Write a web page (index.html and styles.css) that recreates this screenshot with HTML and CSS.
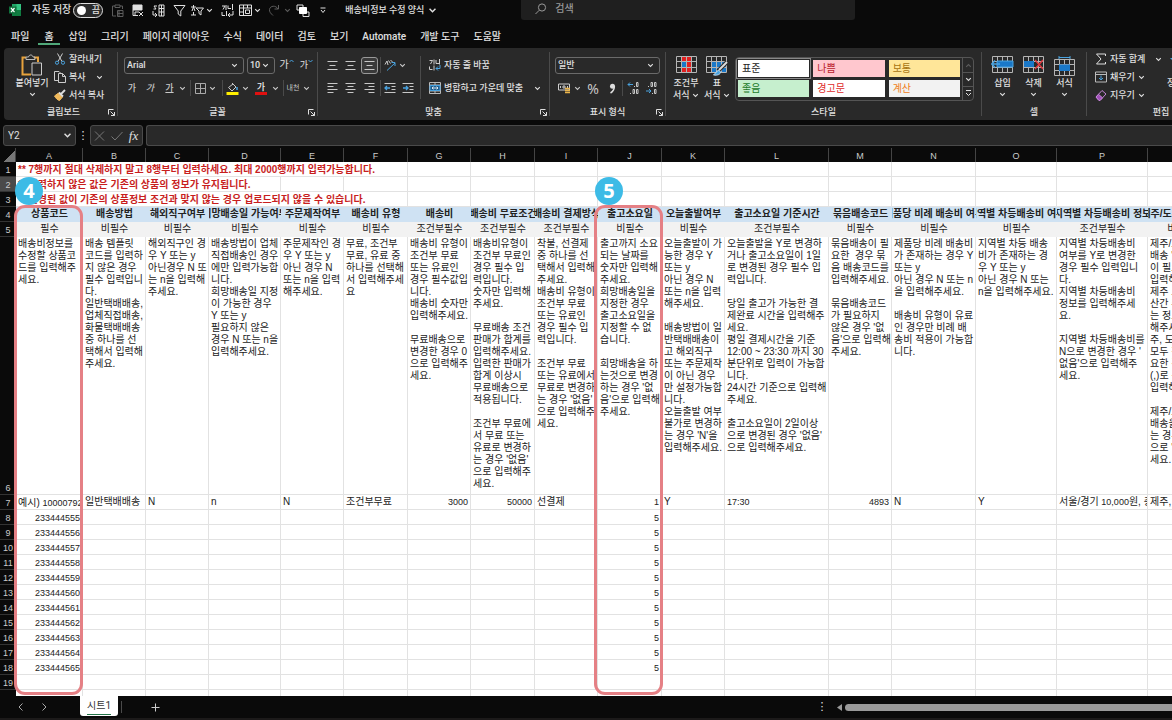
FILE: index.html
```html
<!DOCTYPE html>
<html lang="ko">
<head>
<meta charset="utf-8">
<title>배송비정보 수정 양식</title>
<link rel="stylesheet" href="styles.css">
</head>
<body>
<svg class="defs" aria-hidden="true">
  <symbol id="chev" viewBox="0 0 7 5"><path d="M1.2 1.2 3.5 3.5 5.8 1.2" fill="none" stroke="currentColor" stroke-width="1.1"/></symbol>
  <symbol id="launch" viewBox="0 0 7 7"><path d="M.5 5.5v-5h5M2.5 2.5l4 4M6.5 3v3.5H3" fill="none" stroke="currentColor"/></symbol>
  <symbol id="grid" viewBox="0 0 21 17"><path d="M.5.5h20v16H.5zM.5 5.5h20M.5 11.5h20M5.5.5v16M10.5.5v16M15.5.5v16" fill="none" stroke="#b5b5b5"/></symbol>
</svg>

<header class="titlebar">
  <svg class="logo" width="12" height="12" viewBox="0 0 12 12"><path d="M3 0h9v12H3z" fill="#21a366"/><path d="M7.500 0H12v6H7.500z" fill="#33c481"/><path d="M3 6h9v6H3z" fill="#107c41"/><path d="M0 2.500h7.500v7H0z" fill="#0f703b"/><path d="m2 4 3.500 4.200M5.500 4 2 8.200" stroke="#fff" stroke-width="1.200"/></svg>
  <label class="autosave">자동 저장 <button class="toggle" type="button"><i></i>끔</button></label>
  <div class="quick">
    <button class="dim"><svg width="12" height="13" viewBox="0 0 12 13"><path d="M3 2H.5v10H4M8 2h2.500v3M3 1h5v2.500H3zM5.500 6.500H11v6H5.500zM7 6.500v6M5.500 9.500H11"/></svg></button>
    <button><svg width="12" height="13" viewBox="0 0 12 13"><path d="M1 1h9v5H1z" fill="currentColor"/><path d="M1 6v5.500h5M3 11V8h4M7 8l4 4M11 8l-4 4"/></svg></button>
    <button><svg width="13" height="13" viewBox="0 0 13 13"><path d="M7 1h5v11H7zM7 4.500h5M7 8h5M9.500 1v11M5 2H2l2 3H1.500M1 7v4h4M3 9l2 2-2 2"/></svg></button>
    <button><svg width="13" height="13" viewBox="0 0 13 13"><path d="M1 1.500h11L7.800 7v5L5.200 10V7z"/></svg></button>
    <button><svg width="13" height="13" viewBox="0 0 13 13"><path d="M5 4h7.500L10 7v4L8 9.500V7zM0 3h5M2.500 1v2M1 7l1.500-4L4 7M0 11h5M2.500 8v3"/></svg></button>
    <button><svg width="7" height="5"><use href="#chev"/></svg></button>
    <button><svg width="13" height="13" viewBox="0 0 13 13"><path d="M1 2h3L2 5.500M5 1v5M7 1.500v3h3M8 4.500h2M11.500 0v6M1 8v3.500h3M5.500 7v5M12 7v4H7M9 9l-2 2 2 2"/></svg></button>
    <button><svg width="13" height="13" viewBox="0 0 13 13"><path d="M.5 1h12v10.500H.5zM.5 4h12M4.500 1v10.500M8.500 1v3M.5 8h4M6.500 6h4v3.500h-4z"/></svg></button>
    <button><svg width="7" height="5"><use href="#chev"/></svg></button>
    <button class="dim"><svg width="12" height="12" viewBox="0 0 12 12"><path d="M10.500 1v4h-4M10 5C8 1 2 1.500 1.500 5.500 1.200 8 3 9.500 5 11.500"/></svg></button>
    <button class="dim"><svg width="7" height="5"><use href="#chev"/></svg></button>
    <button><svg width="14" height="13" viewBox="0 0 14 13"><path d="M1 1h6v5H1zM7 8h6v4.500H7z"/><path d="M3.500 3.500h7v6h-7z" fill="#fff" stroke="#fff"/></svg></button>
    <button><svg width="6" height="7" viewBox="0 0 6 7"><path d="M.5 1h5M1 3l2 2.500L5 3"/></svg></button>
  </div>
  <button class="doc">배송비정보 수정 양식 <svg width="9" height="7"><use href="#chev"/></svg></button>
  <label class="search"><svg width="12" height="12" viewBox="0 0 12 12"><circle cx="7" cy="4.500" r="3.600"/><path d="M4.300 7.200.5 11"/></svg><input type="text" placeholder="검색"></label>
</header>

<nav class="tabs">
  <button>파일</button><button class="on">홈</button><button>삽입</button><button>그리기</button><button>페이지 레이아웃</button><button>수식</button><button>데이터</button><button>검토</button><button>보기</button><button>Automate</button><button>개발 도구</button><button>도움말</button>
</nav>

<section class="ribbon">
  <div class="group clip">
    <div class="body">
      <button class="big"><svg width="22" height="22" viewBox="0 0 22 22"><path d="M5 3.500H1.500v17H10" stroke="#e8a33d" stroke-width="2"/><path d="M13 3.500h4V8" stroke="#e8a33d" stroke-width="2"/><path d="M5 5.500V3h2.500C8 .3 11.500.3 12 3h2v2.500z" stroke="#bbb"/><path d="M11 9h9.500v12H11z" fill="#292929" stroke="#ccc"/></svg><span>붙여넣기</span><svg width="7" height="5"><use href="#chev"/></svg></button>
      <div class="stack">
        <button><svg width="12" height="12" viewBox="0 0 12 12"><path d="m3.500.5 4.500 8M8.500.5 4 8.500" stroke="#ccc"/><circle cx="3" cy="9.700" r="1.600" stroke="#4aa3df"/><circle cx="9" cy="9.700" r="1.600" stroke="#4aa3df"/></svg>잘라내기</button>
        <button><svg width="12" height="12" viewBox="0 0 12 12"><path d="M4 9.500H.5v-9H5L6.500 2M4.500 2.500h4l3 3v6h-7zM8.500 2.500v3h3" stroke="#ccc"/></svg>복사<svg class="after" width="7" height="5"><use href="#chev"/></svg></button>
        <button><svg width="12" height="12" viewBox="0 0 12 12"><path d="m.5 7 4-3 4 4-3 3.500C3.500 11 2 9.500.5 7z" fill="#f0b95c" stroke="#f0b95c"/><path d="m5 3.500 4 4M7 5l4-4" stroke="#ddd" stroke-width="1.800"/></svg>서식 복사</button>
      </div>
    </div>
    <div class="label">클립보드<svg width="7" height="7"><use href="#launch"/></svg></div>
  </div>
  <span class="rule"></span>
  <div class="group font">
    <div class="rows">
      <div class="fonts">
        <span class="combo"><select aria-label="글꼴"><option>Arial</option></select><svg width="7" height="5"><use href="#chev"/></svg></span>
        <span class="combo"><select aria-label="글꼴 크기"><option>10</option></select><svg width="7" height="5"><use href="#chev"/></svg></span>
        <button class="ga">가<svg width="5" height="4" viewBox="0 0 5 4"><path d="M.5 3 2.500 1l2 2" stroke="#4aa3df"/></svg></button>
        <button class="ga small">가<svg width="5" height="4" viewBox="0 0 5 4"><path d="m.5 1 2 2 2-2" stroke="#4aa3df"/></svg></button>
      </div>
      <div class="tools font-tools">
        <button><b>가</b></button><button><i>가</i></button><button><u>가</u></button><button><svg width="7" height="5"><use href="#chev"/></svg></button><span class="bar"></span>
        <button><svg width="11" height="11" viewBox="0 0 11 11"><path d="M.5.5h10v10H.5zM5.500.5v10M.5 5.500h10" stroke="#aaa"/></svg></button><button><svg width="7" height="5"><use href="#chev"/></svg></button><span class="bar"></span>
        <button><svg width="13" height="13" viewBox="0 0 13 13"><path d="m6 1 4 4-4 4-3.500-3.500L7 2" stroke="#ccc"/><path d="M11 5v3" stroke="#4aa3df" stroke-width="1.500"/><path d="M.5 10h12v3H.5z" fill="#ffee00" stroke="none"/></svg></button><button><svg width="7" height="5"><use href="#chev"/></svg></button>
        <button class="ink">가</button><button><svg width="7" height="5"><use href="#chev"/></svg></button><span class="bar"></span>
        <button class="ruby">내천</button><button><svg width="7" height="5"><use href="#chev"/></svg></button>
      </div>
    </div>
    <div class="label">글꼴<svg width="7" height="7"><use href="#launch"/></svg></div>
  </div>
  <span class="rule"></span>
  <div class="group align">
    <div class="body">
      <div class="rows left">
        <div class="tools align-tools">
          <button><svg width="11" height="9" viewBox="0 0 11 9"><path d="M.5.5h10M2.500 4.500h6M.5 8.500h10"/></svg></button>
          <button><svg width="11" height="9" viewBox="0 0 11 9"><path d="M.5.5h10M2.500 4.500h6M.5 8.500h10"/></svg></button>
          <button class="boxed"><svg width="11" height="9" viewBox="0 0 11 9"><path d="M.5.5h10M2.500 4.500h6M.5 8.500h10"/></svg></button>
          <span class="bar"></span>
          <button><svg width="12" height="12" viewBox="0 0 12 12"><path d="M1 5.500 3 2l1 4M4.500 1.500l2 3M6.500 1l2 2" stroke="#ccc"/><path d="M3 11.500 11 4M7.500 3.500H11V7" stroke="#4aa3df"/></svg></button>
          <button><svg width="7" height="5"><use href="#chev"/></svg></button>
        </div>
        <div class="tools align-tools wide">
          <button><svg width="11" height="11" viewBox="0 0 11 11"><path d="M.5.5h10M.5 3.500h6M.5 6.500h10M.5 9.500h6"/></svg></button>
          <button><svg width="11" height="11" viewBox="0 0 11 11"><path d="M.5.5h10M2.500 3.500h6M.5 6.500h10M2.500 9.500h6"/></svg></button>
          <button><svg width="11" height="11" viewBox="0 0 11 11"><path d="M.5.5h10M4.500 3.500h6M.5 6.500h10M4.500 9.500h6"/></svg></button>
          <span class="bar"></span>
          <button><svg width="12" height="11" viewBox="0 0 12 11"><path d="M.5.5h11M7.500 3.500h4M7.500 6.500h4M.5 9.500h11"/><path d="M6 5H1M3 3 1 5l2 2" stroke="#4aa3df" stroke-width="1.300"/></svg></button>
          <button><svg width="12" height="11" viewBox="0 0 12 11"><path d="M.5.5h11M7.500 3.500h4M7.500 6.500h4M.5 9.500h11"/><path d="M1 5h5M4 3l2 2-2 2" stroke="#4aa3df" stroke-width="1.300"/></svg></button>
        </div>
      </div>
      <span class="rule inner"></span>
      <div class="rows right">
        <button class="line"><svg width="12" height="12" viewBox="0 0 12 12"><path d="M.5 1.500h3L1.500 5M5 .5v5M7 1v3.500h3M10.500 0v5.500M.5 7.500v3h3M5 6.500v5" stroke="#ccc"/><path d="M11 6v3.500H7M9 7.500l-2 2 2 2" stroke="#4aa3df"/></svg>자동 줄 바꿈</button>
        <button class="line"><svg width="12" height="12" viewBox="0 0 12 12"><path d="M.5.5h11v11H.5zM.5 3h11M.5 9h11M6 .5V3M6 9v2.500" stroke="#bbb"/><path d="M1 3.500h10v5H1z" fill="#1d5c8c" stroke="#4aa3df"/><path d="M3 6h6M4.500 4.700 3 6l1.500 1.300M7.500 4.700 9 6 7.500 7.300" stroke="#fff" stroke-width=".8"/></svg>병합하고 가운데 맞춤<svg class="end" width="7" height="5"><use href="#chev"/></svg></button>
      </div>
    </div>
    <div class="label">맞춤<svg width="7" height="7"><use href="#launch"/></svg></div>
  </div>
  <span class="rule"></span>
  <div class="group number">
    <div class="rows">
      <div class="fonts"><span class="combo"><select aria-label="표시 형식"><option>일반</option></select><svg width="7" height="5"><use href="#chev"/></svg></span></div>
      <div class="tools number-tools">
        <button><svg width="13" height="11" viewBox="0 0 13 11"><path d="M.5 1h11v6H.5zM2.500 3v2M9.500 3v2M5 3h2v2H5z" stroke="#ccc"/><path d="M7 5.500h5M7 7.500h5M7 9.500h5" stroke="#e9b44c" stroke-width="1.500"/></svg></button>
        <button><svg width="7" height="5"><use href="#chev"/></svg></button>
        <button class="pct">%</button>
        <button><svg width="7" height="11" viewBox="0 0 7 11"><circle cx="3.500" cy="3.200" r="2.500" fill="#ddd" stroke="none"/><path d="M5.300 3C5.500 6 4 8.500 1.500 10" stroke="#ddd" stroke-width="1.500"/></svg></button>
        <span class="bar"></span>
        <button><svg width="13" height="12" viewBox="0 0 13 12"><path d="M6 2.500H1M3 .5l-2 2 2 2" stroke="#4aa3df"/><path d="M9.500.5H11v4H9.500zM6 7.500h1.500v4H6zM9.500 7.500H11v4H9.500zM3.500 11v1M7.500 4v1"/></svg></button>
        <button><svg width="13" height="12" viewBox="0 0 13 12"><path d="M1 9h5M4 7l2 2-2 2" stroke="#4aa3df"/><path d="M6 .5h1.500v4H6zM9.500.5H11v4H9.500zM9.500 7.500H11v4H9.500zM3.500 4v1M7.500 11v1"/></svg></button>
      </div>
    </div>
    <div class="label">표시 형식<svg width="7" height="7"><use href="#launch"/></svg></div>
  </div>
  <span class="rule"></span>
  <div class="group styles">
    <div class="body">
      <button class="big cond"><svg width="21" height="17" viewBox="0 0 21 17"><path d="M5 0h6v5H5zM5 11h11v5.500H5zM11 0h5v5h-5z" fill="#e01f1f" stroke="none"/><path d="M5 5.500h6V11H5z" fill="#1a78c8" stroke="none"/><path d="M11 5.500h5V11h-5z" fill="#e01f1f" stroke="none"/><use href="#grid"/></svg><span>조건부<br>서식 <svg width="7" height="5"><use href="#chev"/></svg></span></button>
      <button class="big tbl"><svg class="tall" width="23" height="20" viewBox="0 0 23 20"><path d="M6 6h15v10H6z" fill="#1a78c8" stroke="none"/><use href="#grid" width="21" height="17"/><path d="m21 6-9 9" stroke="#292929" stroke-width="4"/><path d="m21 6-8 8" stroke="#ddd" stroke-width="2"/><path d="m12.500 14-5 5c4 .5 7-.5 7-3z" fill="#4aa3df" stroke="#bfe0f7"/></svg><span>표<br>서식 <svg width="7" height="5"><use href="#chev"/></svg></span></button>
      <div class="gallery">
        <div class="swatches">
          <button class="normal">표준</button><button class="bad">나쁨</button><button class="neutral">보통</button>
          <button class="good">좋음</button><button class="warn">경고문</button><button class="calc">계산</button>
        </div>
        <div class="pager"><button class="dim"><svg width="7" height="5" class="flip"><use href="#chev"/></svg></button><button><svg width="7" height="5"><use href="#chev"/></svg></button><button><svg width="7" height="7" viewBox="0 0 7 7"><path d="M1 .5h5M1 3l2.500 2.500L6 3"/></svg></button></div>
      </div>
    </div>
    <div class="label">스타일</div>
  </div>
  <span class="rule"></span>
  <div class="group cells">
    <div class="body">
      <button class="big"><svg width="23" height="17" viewBox="0 0 23 17"><use href="#grid" x="1" width="21" height="17"/><path d="M6 5h16v6H6z" fill="#1a78c8" stroke="#4aa3df"/><path d="M9 8H1M4 4.500.800 8 4 11.500" stroke="#4aa3df" stroke-width="1.500"/></svg><span>삽입</span><svg width="7" height="5"><use href="#chev"/></svg></button>
      <button class="big"><svg width="23" height="17" viewBox="0 0 23 17"><use href="#grid" x="1" width="21" height="17"/><path d="M2 5h10v6H2z" fill="#1a78c8" stroke="none"/><path d="m13 4 8 9M21 4l-8 9" stroke="#e0383e" stroke-width="1.500"/></svg><span>삭제</span><svg width="7" height="5"><use href="#chev"/></svg></button>
      <button class="big"><svg class="tall" width="21" height="20" viewBox="0 0 21 20"><path d="M5 1.500h11M5 0v3M16 0v3" stroke="#4aa3df"/><use href="#grid" y="3" width="21" height="17"/><path d="M5 8.500h11V15H5z" fill="#1a78c8" stroke="none"/></svg><span>서식</span><svg width="7" height="5"><use href="#chev"/></svg></button>
    </div>
    <div class="label">셀</div>
  </div>
  <span class="rule"></span>
  <div class="group edit">
    <div class="body">
      <div class="stack">
        <button><svg width="12" height="12" viewBox="0 0 12 12"><path d="M10.500 3V1H1.500l4.500 5-4.500 5h9V9"/></svg>자동 합계<svg class="after" width="7" height="5"><use href="#chev"/></svg></button>
        <button><svg width="12" height="12" viewBox="0 0 12 12"><path d="M.5 1h11v10H.5zM.5 3.500h11" stroke="#bbb"/><path d="M6 4.500V9M4 7l2 2 2-2" stroke="#4aa3df"/></svg>채우기<svg width="7" height="5"><use href="#chev"/></svg></button>
        <button><svg width="12" height="12" viewBox="0 0 12 12"><path d="m1 8 6-6.500 4 3.500-6 6.500H4z" stroke="#c586d8"/><path d="m1 8 2.500-2.700 4 3.500L5 11.500H4z" fill="#a04fb8" stroke="#c586d8"/></svg>지우기<svg width="7" height="5"><use href="#chev"/></svg></button>
      </div>
      <button class="big"><svg width="22" height="17" viewBox="0 0 22 17"><path d="M0 2h8L4 6z" fill="#4aa3df" stroke="none"/><path d="M10 3h10l-4 5v6"/></svg><span>정렬 및<br>필터</span></button>
    </div>
    <div class="label">편집</div>
  </div>
</section>

<section class="formula">
  <span class="combo name"><select aria-label="이름 상자"><option>Y2</option></select><svg width="9" height="7"><use href="#chev"/></svg></span>
  <span class="dots">⋮</span>
  <div class="fx"><button class="dim"><svg width="11" height="10" viewBox="0 0 11 10"><path d="m1 .5 9 9M10 .5l-9 9"/></svg></button><button class="dim"><svg width="12" height="10" viewBox="0 0 12 10"><path d="M.5 5.500 4 9l7.500-8"/></svg></button><button class="fn">fx</button></div>
  <input type="text" aria-label="수식 입력줄">
</section>

<main class="sheet">
  <table>
    <colgroup><col class="w16"><col class="w67"><col class="w63"><col class="w63"><col class="w72"><col class="w63"><col class="w64"><col class="w63"><col class="w64"><col class="w63"><col class="w64"><col class="w63"><col class="w104"><col class="w63"><col class="w84"><col class="w81"><col class="w91"><col class="w66"></colgroup>
    <thead><tr><th class="corner"></th><th>A</th><th>B</th><th>C</th><th>D</th><th>E</th><th>F</th><th>G</th><th>H</th><th>I</th><th>J</th><th>K</th><th>L</th><th>M</th><th>N</th><th>O</th><th>P</th><th>Q</th></tr></thead>
    <tbody>
    <tr class="note"><th>1</th><td colspan="6">** 7행까지 절대 삭제하지 말고 8행부터 입력하세요. 최대 2000행까지 입력가능합니다.</td><td></td><td></td><td></td><td></td><td></td><td></td><td></td><td></td><td></td><td></td><td></td></tr>
    <tr class="note"><th class="sel">2</th><td colspan="4">** 입력하지 않은 값은 기존의 상품의 정보가 유지됩니다.</td><td></td><td></td><td></td><td></td><td></td><td></td><td></td><td></td><td></td><td></td><td></td><td></td><td></td></tr>
    <tr class="note"><th>3</th><td colspan="6">** 변경된 값이 기존의 상품정보 조건과 맞지 않는 경우 업로드되지 않을 수 있습니다.</td><td></td><td></td><td></td><td></td><td></td><td></td><td></td><td></td><td></td><td></td><td></td></tr>
    <tr class="head"><th>4</th><td><div>상품코드</div></td><td><div>배송방법</div></td><td><div>해외직구여부</div></td><td><div>희망배송일 가능여부</div></td><td><div>주문제작여부</div></td><td><div>배송비 유형</div></td><td><div>배송비</div></td><td><div>배송비 무료조건</div></td><td><div>배송비 결제방식</div></td><td><div>출고소요일</div></td><td><div>오늘출발여부</div></td><td><div>출고소요일 기준시간</div></td><td><div>묶음배송코드</div></td><td><div>제품당 비례 배송비 여부</div></td><td><div>지역별 차등배송비 여부</div></td><td><div>지역별 차등배송비 정보</div></td><td><div>제주/도서산간 여부</div></td></tr>
    <tr class="need"><th>5</th><td>필수</td><td>비필수</td><td>비필수</td><td>비필수</td><td>비필수</td><td>비필수</td><td>조건부필수</td><td>조건부필수</td><td>조건부필수</td><td>비필수</td><td>비필수</td><td>조건부필수</td><td>비필수</td><td>비필수</td><td>비필수</td><td>조건부필수</td><td>비필수</td></tr>
    <tr class="guide"><th>6</th>
      <td>배송비정보를<br>수정할 상품코<br>드를 입력해주<br>세요.</td>
      <td>배송 템플릿<br>코드를 입력하<br>지 않은 경우<br>필수 입력입니<br>다.<br>일반택배배송,<br>업체직접배송,<br>화물택배배송<br>중 하나를 선<br>택해서 입력해<br>주세요.</td>
      <td>해외직구인 경<br>우 Y 또는 y<br>아닌경우 N 또<br>는 n을 입력해<br>주세요.</td>
      <td>배송방법이 업체<br>직접배송인 경우<br>에만 입력가능합<br>니다.<br>희망배송일 지정<br>이 가능한 경우<br>Y 또는 y<br>필요하지 않은<br>경우 N 또는 n을<br>입력해주세요.</td>
      <td>주문제작인 경<br>우 Y 또는 y<br>아닌 경우 N<br>또는 n을 입력<br>해주세요.</td>
      <td>무료, 조건부<br>무료, 유료 중<br>하나를 선택해<br>서 입력해주세<br>요</td>
      <td>배송비 유형이<br>조건부 무료<br>또는 유료인<br>경우 필수값입<br>니다.<br>배송비 숫자만<br>입력해주세요.<br><br>무료배송으로<br>변경한 경우 0<br>으로 입력해주<br>세요.</td>
      <td>배송비유형이<br>조건부 무료인<br>경우 필수 입<br>력입니다.<br>숫자만 입력해<br>주세요.<br><br>무료배송 조건<br>판매가 합계를<br>입력해주세요.<br>입력한 판매가<br>합계 이상시<br>무료배송으로<br>적용됩니다.<br><br>조건부 무료에<br>서 무료 또는<br>유료로 변경하<br>는 경우 '없음'<br>으로 입력해주<br>세요.</td>
      <td>착불, 선결제<br>중 하나를 선<br>택해서 입력해<br>주세요.<br>배송비 유형이<br>조건부 무료<br>또는 유료인<br>경우 필수 입<br>력입니다.<br><br>조건부 무료<br>또는 유료에서<br>무료로 변경하<br>는 경우 '없음'<br>으로 입력해주<br>세요.</td>
      <td>출고까지 소요<br>되는 날짜를<br>숫자만 입력해<br>주세요.<br>희망배송일을<br>지정한 경우<br>출고소요일을<br>지정할 수 없<br>습니다.<br><br>희망배송을 하<br>는것으로 변경<br>하는 경우 '없<br>음'으로 입력해<br>주세요.</td>
      <td>오늘출발이 가<br>능한 경우 Y<br>또는 y<br>아닌 경우 N<br>또는 n을 입력<br>해주세요.<br><br>배송방법이 일<br>반택배배송이<br>고 해외직구<br>또는 주문제작<br>이 아닌 경우<br>만 설정가능합<br>니다.<br>오늘출발 여부<br>불가로 변경하<br>는 경우 'N'을<br>입력해주세요.</td>
      <td>오늘출발을 Y로 변경하<br>거나 출고소요일이 1일<br>로 변경된 경우 필수 입<br>력입니다.<br><br>당일 출고가 가능한 결<br>제완료 시간을 입력해주<br>세요.<br>평일 결제시간을 기준<br>12:00 ~ 23:30 까지 30<br>분단위로 입력이 가능합<br>니다.<br>24시간 기준으로 입력해<br>주세요.<br><br>출고소요일이 2일이상<br>으로 변경된 경우 '없음'<br>으로 입력해주세요.</td>
      <td>묶음배송이 필<br>요한&nbsp; 경우 묶<br>음 배송코드를<br>입력해주세요.<br><br>묶음배송코드<br>가 필요하지<br>않은 경우 '없<br>음'으로 입력해<br>주세요.</td>
      <td>제품당 비례 배송비<br>가 존재하는 경우 Y<br>또는 y<br>아닌 경우 N 또는 n<br>을 입력해주세요.<br><br>배송비 유형이 유료<br>인 경우만 비례 배<br>송비 적용이 가능합<br>니다.</td>
      <td>지역별 차등 배송<br>비가 존재하는 경<br>우 Y 또는 y<br>아닌 경우 N 또는<br>n을 입력해주세요.</td>
      <td>지역별 차등배송비<br>여부를 Y로 변경한<br>경우 필수 입력입니<br>다.<br>지역별 차등배송비<br>정보를 입력해주세<br>요.<br><br>지역별 차등배송비를<br>N으로 변경한 경우 '<br>없음'으로 입력해주<br>세요.</td>
      <td>제주/도서<br>배송 '가능<br>이 필요한<br>입력해주<br>제주 도서<br>산간 추가<br>는 정보를<br>해주세요<br>주, 도서산<br>모두 적용<br>요한 경우<br>(,)로 구분<br>입력해주<br><br>제주/도서<br>배송을 하<br>는 경우 없<br>으로 '없음<br>세요.</td>
    </tr>
    <tr class="sample"><th>7</th><td class="low">예시) <span>10000792</span></td><td>일반택배배송</td><td>N</td><td>n</td><td>N</td><td>조건부무료</td><td class="num">3000</td><td class="num">50000</td><td>선결제</td><td class="num">1</td><td>Y</td><td><span>17:30</span></td><td class="num">4893</td><td>N</td><td>Y</td><td>서울/경기 <span>10,000</span>원, 충청</td><td>제주, 도서</td></tr>
    <tr><th>8</th><td class="num">233444555</td><td></td><td></td><td></td><td></td><td></td><td></td><td></td><td></td><td class="num">5</td><td></td><td></td><td></td><td></td><td></td><td></td><td></td></tr>
    <tr><th>9</th><td class="num">233444556</td><td></td><td></td><td></td><td></td><td></td><td></td><td></td><td></td><td class="num">5</td><td></td><td></td><td></td><td></td><td></td><td></td><td></td></tr>
    <tr><th>10</th><td class="num">233444557</td><td></td><td></td><td></td><td></td><td></td><td></td><td></td><td></td><td class="num">5</td><td></td><td></td><td></td><td></td><td></td><td></td><td></td></tr>
    <tr><th>11</th><td class="num">233444558</td><td></td><td></td><td></td><td></td><td></td><td></td><td></td><td></td><td class="num">5</td><td></td><td></td><td></td><td></td><td></td><td></td><td></td></tr>
    <tr><th>12</th><td class="num">233444559</td><td></td><td></td><td></td><td></td><td></td><td></td><td></td><td></td><td class="num">5</td><td></td><td></td><td></td><td></td><td></td><td></td><td></td></tr>
    <tr><th>13</th><td class="num">233444560</td><td></td><td></td><td></td><td></td><td></td><td></td><td></td><td></td><td class="num">5</td><td></td><td></td><td></td><td></td><td></td><td></td><td></td></tr>
    <tr><th>14</th><td class="num">233444561</td><td></td><td></td><td></td><td></td><td></td><td></td><td></td><td></td><td class="num">5</td><td></td><td></td><td></td><td></td><td></td><td></td><td></td></tr>
    <tr><th>15</th><td class="num">233444562</td><td></td><td></td><td></td><td></td><td></td><td></td><td></td><td></td><td class="num">5</td><td></td><td></td><td></td><td></td><td></td><td></td><td></td></tr>
    <tr><th>16</th><td class="num">233444563</td><td></td><td></td><td></td><td></td><td></td><td></td><td></td><td></td><td class="num">5</td><td></td><td></td><td></td><td></td><td></td><td></td><td></td></tr>
    <tr><th>17</th><td class="num">233444564</td><td></td><td></td><td></td><td></td><td></td><td></td><td></td><td></td><td class="num">5</td><td></td><td></td><td></td><td></td><td></td><td></td><td></td></tr>
    <tr><th>18</th><td class="num">233444565</td><td></td><td></td><td></td><td></td><td></td><td></td><td></td><td></td><td class="num">5</td><td></td><td></td><td></td><td></td><td></td><td></td><td></td></tr>
    <tr><th>19</th><td></td><td></td><td></td><td></td><td></td><td></td><td></td><td></td><td></td><td></td><td></td><td></td><td></td><td></td><td></td><td></td><td></td></tr>
    <tr><th></th><td></td><td></td><td></td><td></td><td></td><td></td><td></td><td></td><td></td><td></td><td></td><td></td><td></td><td></td><td></td><td></td><td></td></tr>
    </tbody>
  </table>
  <div class="mark code"><span>4</span></div>
  <div class="mark days"><span>5</span></div>
</main>

<footer class="sheetbar">
  <div class="nav"><button><svg width="5" height="8" viewBox="0 0 5 8"><path d="M4.500.5 1 4l3.500 3.500"/></svg></button><button><svg width="5" height="8" viewBox="0 0 5 8"><path d="M.5.500 4 4 .5 7.500"/></svg></button></div>
  <button class="tab"><span>시트1</span></button>
  <span class="bar"></span>
  <button class="add"><svg width="9" height="9" viewBox="0 0 9 9"><path d="M4.500.5v8M.5 4.500h8"/></svg></button>
  <div class="scroll"><span class="dots">⋮</span><svg width="5" height="7" viewBox="0 0 5 7"><path d="M5 0v7L0 3.500z" fill="#999" stroke="none"/></svg><i></i></div>
</footer>
</body>
</html>
```
FILE: styles.css
```css
* { box-sizing: border-box; }
body {
  margin: 0;
  height: 100vh;
  display: flex;
  flex-direction: column;
  overflow: hidden;
  background: #0a0a0a;
  color: #e0e0e0;
  font: 500 9px/12px "Roboto", "Noto Sans CJK KR", sans-serif;
}
button, input, select {
  font: inherit;
  color: inherit;
  background: none;
  border: 0;
  padding: 0;
  margin: 0;
  outline: 0;
}
button {
  display: flex;
  align-items: center;
  justify-content: center;
  white-space: nowrap;
}
svg { fill: none; stroke: currentColor; flex: none; display: block; }
.defs { position: absolute; width: 0; height: 0; }
.dim { color: #5c5c5c; }

/* Title bar */
.titlebar { display: flex; align-items: center; height: 20px; flex: none; padding-left: 9px; }
.logo { stroke: none; }
.autosave { display: flex; align-items: center; gap: 2px; margin-left: 11px; height: 18px; font-size: 10px; }
.toggle { width: 30px; height: 15px; border: 1px solid #ddd; border-radius: 8px; gap: 6px; background: #2a2a2a; font-size: 9px; }
.toggle i { width: 9px; height: 9px; border-radius: 50%; background: #fff; }
.quick {
  display: grid;
  grid-template-columns: 21px 20px 20px 22px 14px 11px 24px 12px 13px 20px 6px 25px 16px;
  margin-left: 4px;
  height: 18px;
}
.doc { margin-left: 14px; gap: 4px; height: 18px; }
.search { display: flex; align-items: center; gap: 8px; align-self: stretch; width: 334px; margin-left: 84px; padding: 0 0 3px 14px; background: #1f1f1f; border-radius: 0 0 3px 3px; color: #999; font-size: 10px; }
.search input { flex: 1; }
.search input::placeholder { color: #999; opacity: 1; }

/* Tabs */
.tabs { display: flex; gap: 4px; height: 28px; padding: 9px 0 3px 6px; flex: none; font-size: 10px; }
.tabs button { padding: 0 5px; }
.tabs .on { padding: 0 6px; border-bottom: 1px solid #4fa879; box-shadow: inset 0 -1px #4fa879; }

/* Ribbon */
.ribbon { display: flex; height: 72px; flex: none; margin-left: 4px; background: #292929; border-radius: 4px 0 0 4px; overflow: hidden; }
.rule { width: 1px; margin: 4px 0; background: #4a4a4a; flex: none; }
.rule.inner { margin: 8px 0 5px; }
.bar { width: 1px; height: 16px; background: #4a4a4a; }
.group { display: grid; grid-template-rows: 56px 16px; flex: none; }
.label { display: grid; place-items: center; position: relative; }
.label svg { position: absolute; right: 2px; top: 5px; }
.body { display: flex; }
.clip { width: 113px; padding-left: 6px; }
.font { width: 199px; }
.align { width: 231px; }
.number { width: 115px; }
.styles { width: 315px; }
.cells { width: 104px; }
.edit { width: 148px; }
.cells .body { padding-left: 5px; }
.edit .body { padding-left: 8px; }
.styles .body { padding-left: 3px; }

.big { flex-direction: column; justify-content: flex-start; padding-top: 8px; width: 31px; }
.big > svg:first-child { margin: 0 0 4px; }
.big > svg:last-child { margin-top: 3px; }
.big > .tall:first-child { margin: 0 0 1px; }
.big span svg { display: inline; }
.cells .tall { margin-bottom: 1px; }
.clip .big { width: 44px; padding-top: 6px; }
.clip .big > svg:first-child { margin: 0 0 1px; }
.cond { width: 34px; }
.tbl { width: 28px; }

.stack { display: flex; flex-direction: column; padding-top: 2px; }
.stack button { height: 18px; gap: 3px; justify-content: flex-start; }
.stack .after { margin-left: 7px; }
.edit .stack { width: 70px; }

.rows { display: grid; grid-template-rows: 24px 22px; padding-top: 5px; }
.fonts { display: flex; align-items: center; gap: 3px; padding-left: 6px; }
.number .fonts { padding-left: 5px; }
.combo { display: grid; grid-template-columns: 1fr 12px; align-items: center; height: 17px; width: 120px; border: 1px solid #6a6a6a; border-radius: 3px; background: #292929; }
.combo select { grid-area: 1 / 1 / 2 / 3; appearance: none; height: 15px; padding-left: 2px; }
.combo svg { grid-area: 1 / 2; pointer-events: none; }
.combo + .combo { width: 28px; }
.number .combo { width: 105px; }
.ga { width: 17px; align-items: flex-start; font-weight: 400; font-size: 10px; }
.ga.small { font-size: 9px; }
.tools { display: grid; align-items: center; justify-items: center; color: #c8c8c8; }
.tools .bar { align-self: center; }
.font-tools { grid-template-columns: 12px 24px 15px 10px 7px 12px 13px 6px 14px 12px 20px 8px 8px 12px 14px; padding-left: 8px; justify-content: start; }
.font-tools b { font-weight: 500; }
.ink { border-bottom: 3px solid #e01010; width: 12px; height: 14px; line-height: 10px; color: #eee; }
.ruby { font-size: 7px; font-weight: 400; line-height: 8px; }
.align .left { width: 102px; padding-left: 6px; }
.align .right { flex: 1; padding-left: 8px; }
.align-tools { grid-template-columns: 16px 20px 18px 4px 16px 8px; justify-content: start; }
.align-tools.wide { grid-template-columns: 16px 20px 18px 4px 16px 20px; }
.boxed { width: 17px; height: 17px; border: 1px solid #999; border-radius: 3px; background: #3a3a3a; }
.line { gap: 3px; justify-content: flex-start; }
.line .end { margin: 0 8px 0 auto; }
.number-tools { grid-template-columns: 18px 9px 22px 16px 5px 16px 20px; padding-left: 5px; justify-content: start; }
.pct { font: 14px "Noto Sans", sans-serif; }

.gallery { display: flex; width: 239px; height: 44px; margin: 9px 0 0 4px; border: 1px solid #555; border-radius: 4px; overflow: hidden; }
.swatches { flex: 1; display: grid; grid-template: 17px 17px / 1fr 1fr 1fr; gap: 3px 4px; padding: 2px; }
.swatches button { justify-content: flex-start; padding-left: 4px; font-size: 10px; font-weight: 400; }
.normal { background: #fff; color: #222; box-shadow: 0 0 0 1px #292929, 0 0 0 2px #888; }
.bad { background: #ffc7ce; color: #b8202c; }
.neutral { background: #ffe699; color: #a87410; }
.good { background: #c6efce; color: #1d7a2a; }
.warn { background: #fff; color: #e02b2b; }
.calc { background: #f2f2f2; color: #f08020; }
.pager { display: grid; grid-template-rows: repeat(3, 1fr); width: 11px; border-left: 1px solid #555; }
.pager button + button { border-top: 1px solid #555; }
.flip { transform: rotate(180deg); }

/* Formula bar */
.formula { display: flex; align-items: center; height: 28px; padding: 5px 0 2px 3px; flex: none; }
.formula .name { width: 73px; height: 21px; border-color: #4a4a4a; font-size: 10px; font-weight: 400; }
.formula .name select { padding-left: 4px; height: 19px; }
.dots { width: 14px; text-align: center; font: 11px/12px "DejaVu Sans", sans-serif; }
.fx { display: grid; grid-template-columns: repeat(3, 17px); width: 53px; height: 21px; border: 1px solid #4a4a4a; border-radius: 3px; background: #292929; }
.fx .dim { color: #777; }
.fn { font: italic 13px "Liberation Serif", serif; }
.formula > input { flex: 1; height: 21px; margin-left: 3px; border: 1px solid #4a4a4a; border-right: 0; border-radius: 3px 0 0 3px; background: #292929; }

/* Sheet */
.sheet { position: relative; flex: 1; min-height: 0; overflow: hidden; background: #fff; color: #222; }
table { table-layout: fixed; width: 0; border-collapse: separate; border-spacing: 0; font: 10px/12px "Liberation Sans", "Noto Sans CJK KR", sans-serif; }
.w16 { width: 16px; } .w63 { width: 63px; } .w64 { width: 64px; } .w66 { width: 66px; } .w67 { width: 67px; } .w72 { width: 72px; }
.w81 { width: 81px; } .w84 { width: 84px; } .w91 { width: 91px; } .w104 { width: 104px; }
tr { height: 15px; }
thead tr { height: 14px; }
th { padding: 2px 0 0; background: #0a0a0a; color: #ccc; font-weight: 400; font-size: 9px; line-height: 12px; border-bottom: 1px solid #333; vertical-align: bottom; }
thead th { border: 0; border-right: 1px solid #444; }
thead th.corner { background: linear-gradient(135deg, #0a0a0a 60%, #777 60%); }
th.sel { background: #4a4a4a; }
td { padding: 1px 0 0 2px; height: 15px; overflow: hidden; white-space: nowrap; line-height: 12px; border-right: 1px solid #e2e2e2; border-bottom: 1px solid #e2e2e2; vertical-align: top; }
.note td { color: #c81e1e; font-weight: 700; padding-top: 2px; }
.head td, .need td { padding: 0; border: 0; text-align: center; line-height: 14px; }
.head td { background: #cfe2f3; font-weight: 700; }
.head div { display: flex; justify-content: center; overflow: hidden; line-height: 13px; }
.need td { background: #f2f2f2; }
.guide { height: 258px; }
td.num { text-align: right; padding: 2px 2px 0 0; font-size: 9px; }
.sample span { font-size: 9px; }
.sample td.num { padding-top: 1px; }
.sample td.low { padding-top: 2px; }

/* Numbered outlines over the columns to fill in */
.mark { position: absolute; top: 57px; width: 69px; height: 490px; border: 3px solid #e58085; border-radius: 11px; }
.code { left: 14px; }
.days { left: 594px; }
.mark span { position: absolute; left: -2px; top: -31px; width: 28px; height: 28px; border-radius: 50%; background: #3dbbe6; color: #fff; font: 700 20px/28px "Noto Sans", sans-serif; text-align: center; }

/* Sheet tabs */
.sheetbar { display: flex; align-items: center; height: 24px; flex: none; border-bottom: 2px solid #1c1a1a; }
.nav { display: flex; gap: 19px; width: 80px; padding-left: 18px; color: #aaa; }
.tab { width: 38px; align-self: flex-start; height: 20px; background: #fff; color: #333; border-radius: 0 0 3px 3px; font-size: 10px; font-weight: 400; }
.tab span { height: 17px; line-height: 16px; border-bottom: 1px solid #217346; }
.sheetbar .bar { margin-left: 3px; height: 12px; }
.add { margin-left: 29px; color: #ccc; }
.scroll { display: flex; align-items: center; width: 357px; margin-left: auto; }
.scroll svg { margin: 0 3px 0 8px; }
.scroll i { flex: 1; height: 7px; border-radius: 4px 0 0 4px; background: #999; }
```
